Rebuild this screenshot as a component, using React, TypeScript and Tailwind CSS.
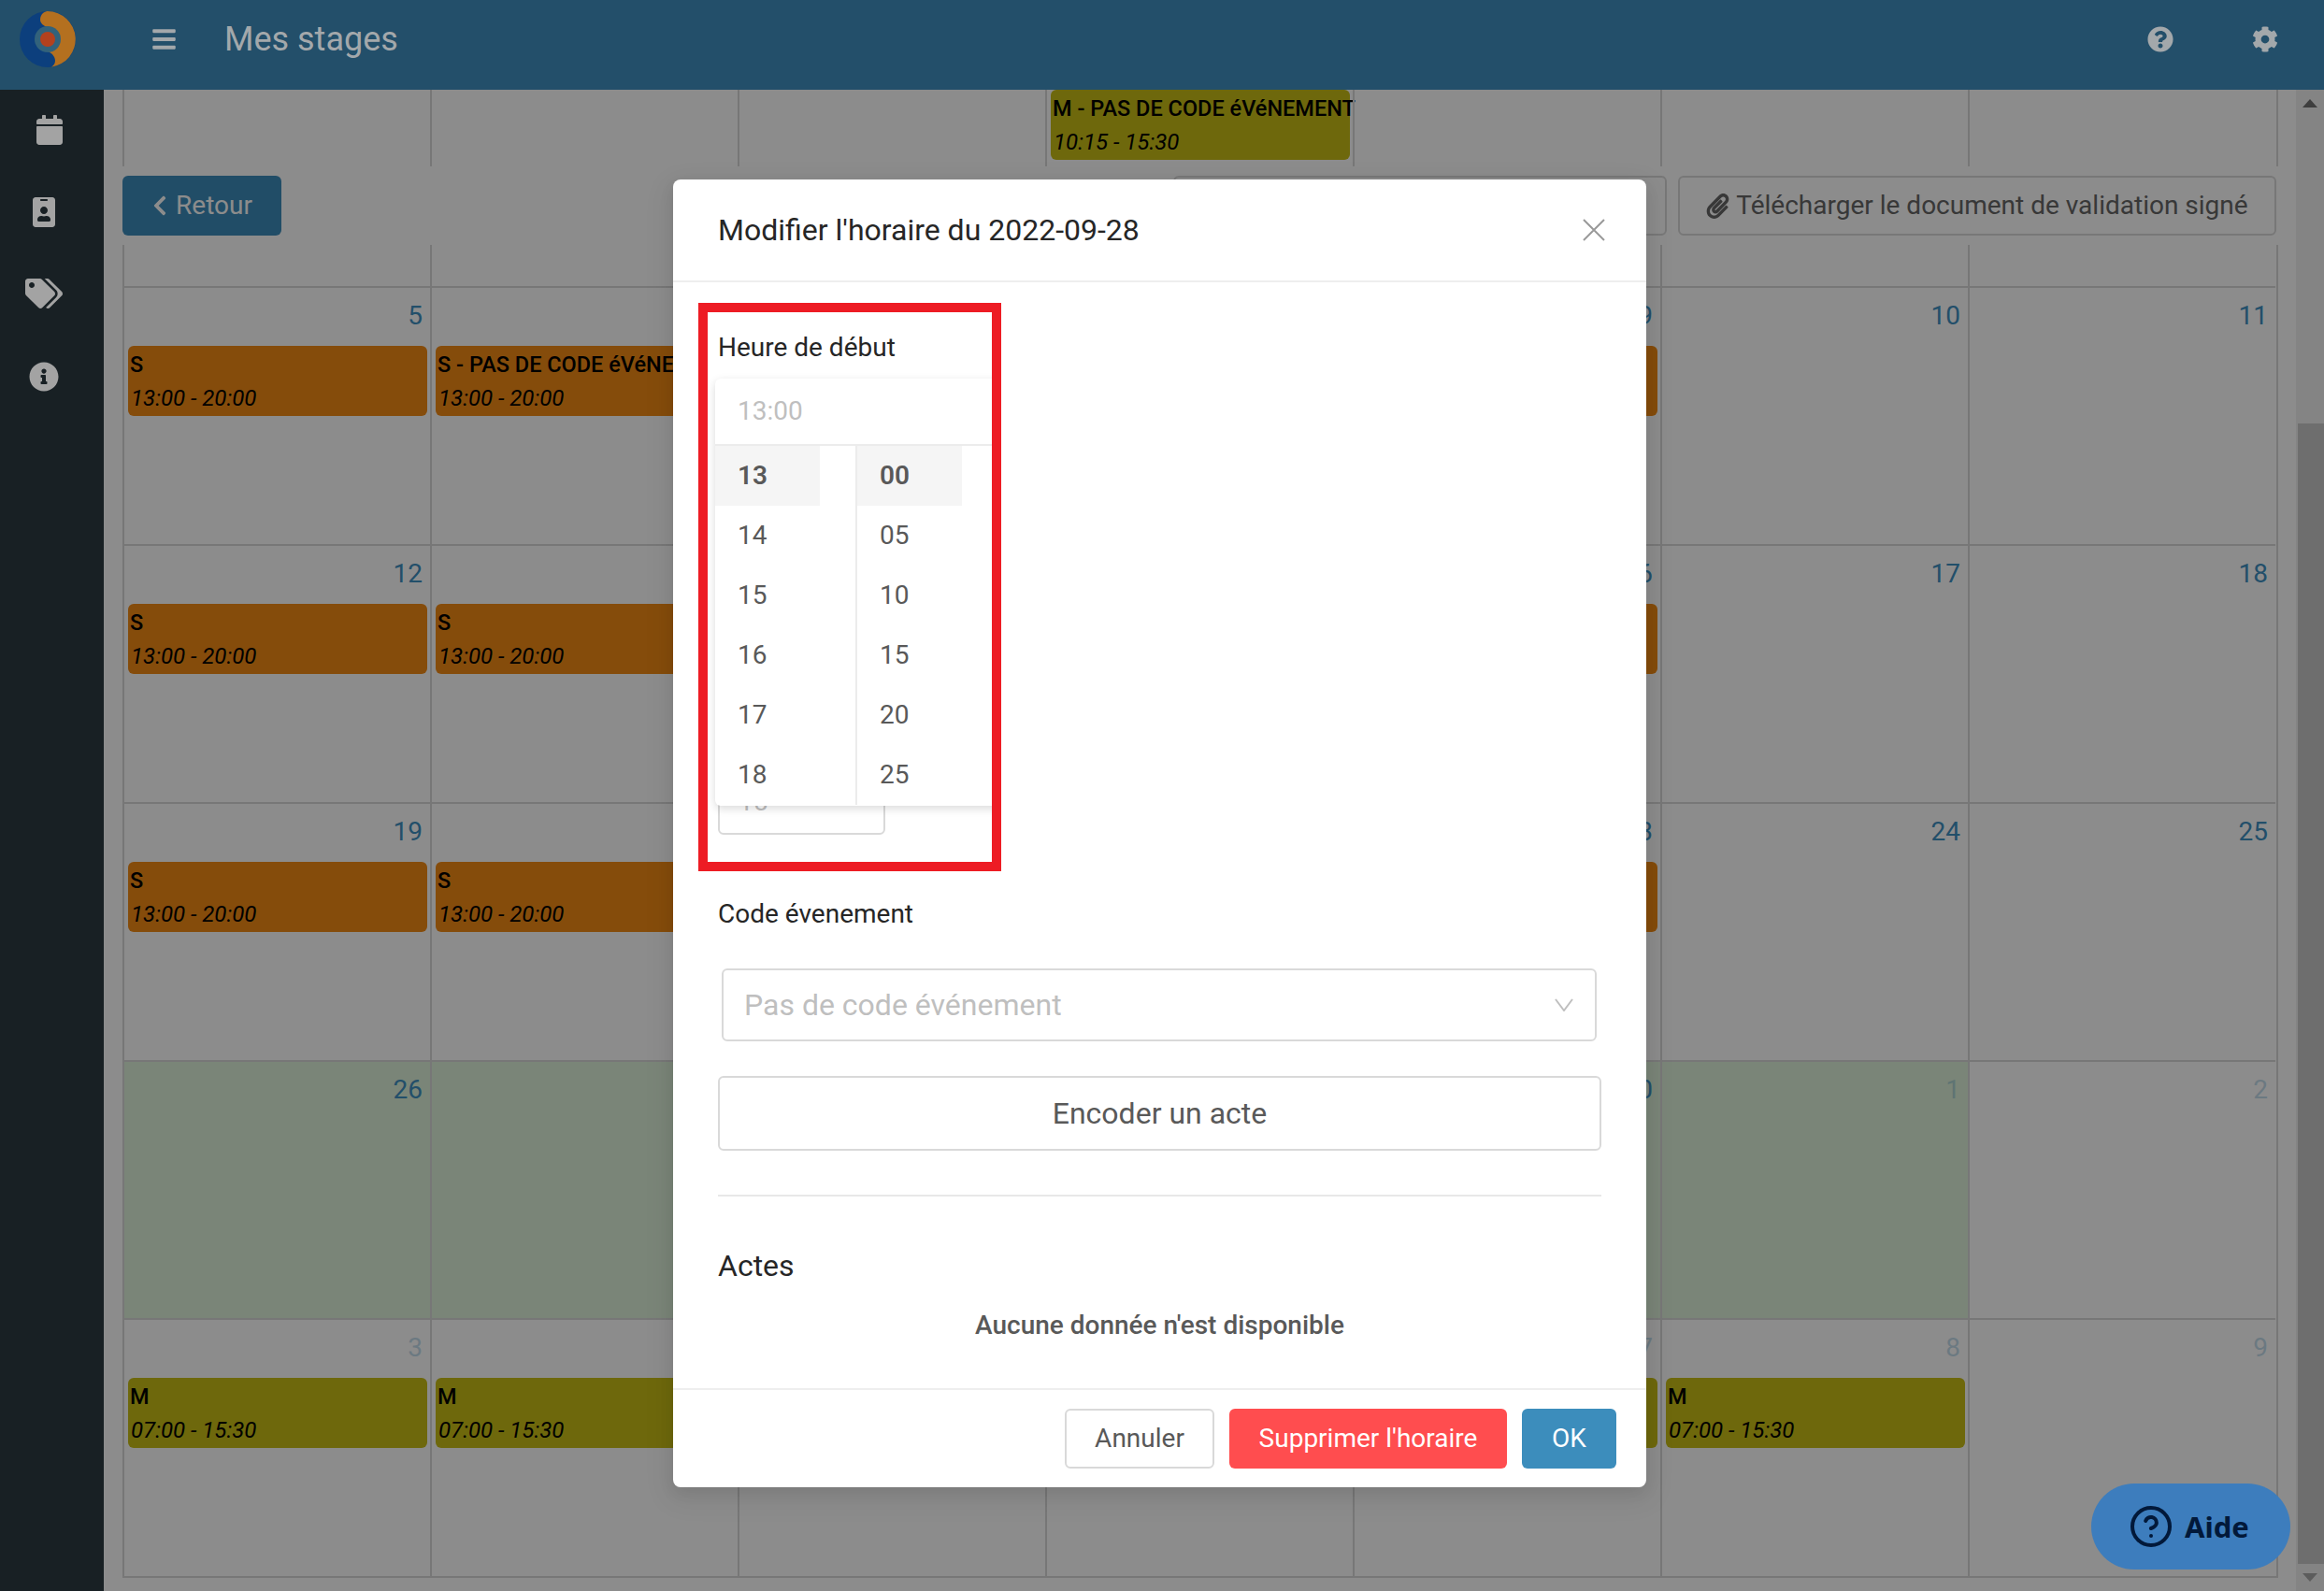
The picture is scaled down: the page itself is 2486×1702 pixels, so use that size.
import React from "react";
import { CircleHelp } from "lucide-react";
import {
  FaBars,
  FaCalendar,
  FaChevronLeft,
  FaCog,
  FaIdBadge,
  FaInfoCircle,
  FaPaperclip,
  FaQuestionCircle,
  FaTags,
} from "react-icons/fa";

type Ev = { title: string; time: string; kind: "orange" | "olive" };
type Cell = { n?: number; faded?: boolean; green?: boolean; ev?: Ev };

const S: Ev = { title: "S", time: "13:00 - 20:00", kind: "orange" };
const SP: Ev = { title: "S - PAS DE CODE éVéNEMENT", time: "13:00 - 20:00", kind: "orange" };
const M: Ev = { title: "M", time: "07:00 - 15:30", kind: "olive" };
const MP: Ev = { title: "M - PAS DE CODE éVéNEMENT", time: "10:15 - 15:30", kind: "olive" };

const rows: Cell[][] = [
  [{}, {}, {}, { ev: MP }, {}, {}, {}],
  [{ n: 5, ev: S }, { n: 6, ev: SP }, {}, {}, { n: 9, ev: S }, { n: 10 }, { n: 11 }],
  [{ n: 12, ev: S }, { n: 13, ev: S }, {}, {}, { n: 16, ev: S }, { n: 17 }, { n: 18 }],
  [{ n: 19, ev: S }, { n: 20, ev: S }, {}, {}, { n: 23, ev: S }, { n: 24 }, { n: 25 }],
  [
    { n: 26, green: true },
    { green: true },
    { green: true },
    { green: true },
    { n: 30, green: true },
    { n: 1, green: true, faded: true },
    { n: 2, faded: true },
  ],
  [
    { n: 3, faded: true, ev: M },
    { ev: M },
    {},
    {},
    { n: 7, faded: true, ev: M },
    { n: 8, faded: true, ev: M },
    { n: 9, faded: true },
  ],
];

function Event({ ev }: { ev: Ev }) {
  return (
    <div
      className={`ml-[4px] mr-[3px] h-[75px] rounded-md pt-[2px] leading-[36px] whitespace-nowrap text-black ${
        ev.kind === "orange" ? "bg-[#f38a14]" : "bg-[#c8bd16]"
      }`}
    >
      <div className="pl-[2px] text-[23.5px] font-medium">{ev.title}</div>
      <div className="pl-[3px] text-[24px] italic">{ev.time}</div>
    </div>
  );
}

function Logo() {
  return (
    <svg width="60" height="60" viewBox="0 0 60 60">
      <circle cx="30" cy="30" r="30" fill="#0c3f7d" />
      <path
        d="M25 2 C27 0.5 29 0 30 0 A30 30 0 0 1 34 59.7 C38 57 39 53 37 49 C35 45 32 44 30 43 L30 17 C26 16 22 13 22 9 C22 6 23 4 25 2 Z"
        fill="#b4701f"
      />
      <circle cx="30" cy="30" r="14" fill="#32627b" />
      <circle cx="30" cy="30" r="8" fill="#b3411e" />
    </svg>
  );
}

function Hours({ items, bordered }: { items: string[]; bordered?: boolean }) {
  return (
    <div className={`w-[152px] ${bordered ? "border-r-2 border-[#ececec]" : ""}`}>
      {items.map((t, i) => (
        <div
          key={t}
          className={`flex h-[64px] w-[112px] items-center pl-[24px] text-[28px] text-[#595959] ${
            i === 0 ? "bg-[#f5f5f5] font-semibold" : ""
          }`}
        >
          {t}
        </div>
      ))}
    </div>
  );
}

export default function App() {
  return (
    <div className="relative flex h-[1702px] w-[2486px] flex-col overflow-hidden bg-white [font-family:Roboto,sans-serif]">
      <header className="flex h-[96px] shrink-0 items-center bg-[#234f6a] pb-[12px] text-[#a3a8ab]">
        <div className="flex w-[111px] items-center justify-center pr-[9px]">
          <Logo />
        </div>
        <FaBars className="ml-[52px] h-[28px] w-[25px]" />
        <div className="ml-[52px] text-[36px] leading-[48px]">Mes stages</div>
        <FaQuestionCircle className="ml-auto h-[28px] w-[28px]" />
        <FaCog className="ml-[84px] mr-[49px] h-[28px] w-[28px]" />
      </header>

      <div className="flex min-h-0 flex-1">
        <aside className="flex w-[111px] shrink-0 flex-col items-center bg-[#182024] pr-[17px] pt-[27px] text-[#a3a3a3]">
          <FaCalendar className="ml-[12px] h-[32px] w-[28px]" />
          <FaIdBadge className="mt-[56px] h-[32px] w-[24px]" />
          <FaTags className="mt-[55px] h-[32px] w-[40px]" />
          <FaInfoCircle className="mt-[57px] h-[32px] w-[32px]" />
        </aside>

        <main className="relative flex min-w-0 flex-1 overflow-hidden">
          <div className="relative min-w-0 flex-1 pl-[20px]">
            <div className="grid w-[2306px] grid-cols-[repeat(7,329px)] grid-rows-[210px_repeat(5,276px)] border-r-2 border-b-2 border-[#d9d9d9]">
              {rows.map((row, r) =>
                row.map((c, i) => (
                  <div
                    key={`${r}-${i}`}
                    className={`border-l-2 border-[#d9d9d9] ${r > 0 ? "border-t-2" : ""} ${c.green ? "bg-[#def3da]" : ""} ${
                      c.n === undefined && r > 0 ? "pt-[62px]" : ""
                    }`}
                  >
                    {c.n !== undefined && (
                      <div
                        className={`mb-[12px] mt-[10px] pr-[8px] text-right text-[28px] leading-[40px] text-[#3f90c2] ${
                          c.faded ? "opacity-30" : ""
                        }`}
                      >
                        {c.n}
                      </div>
                    )}
                    {c.ev && <Event ev={c.ev} />}
                  </div>
                )),
              )}
            </div>

            <div className="absolute left-0 right-0 top-[82px] flex h-[84px] items-center bg-white pl-[20px] pr-[21px] text-[28px]">
              <button className="flex h-[64px] w-[170px] items-center justify-center gap-[8px] rounded-md bg-[#3c8dbc] text-white">
                <FaChevronLeft className="h-[24px] w-[18px]" />
                Retour
              </button>
              <div className="ml-auto flex gap-[12px]">
                <button className="h-[64px] w-[528px] rounded-md border-2 border-[#d9d9d9]" />
                <button className="flex h-[64px] w-[640px] items-center justify-center gap-[7px] rounded-md border-2 border-[#d9d9d9] text-[#666666]">
                  <FaPaperclip className="h-[27px] w-[25px]" />
                  Télécharger le document de validation signé
                </button>
              </div>
            </div>
          </div>

          <div className="flex w-[30px] shrink-0 flex-col bg-[#f1f1f1]">
            <div className="flex h-[29px] items-center justify-center">
              <svg width="16" height="9" viewBox="0 0 16 9">
                <path d="M8 0 L16 9 L0 9 Z" fill="#727272" />
              </svg>
            </div>
            <div className="h-[328px]" />
            <div className="ml-[2px] flex-1 bg-[#c8c8c8]" />
            <div className="flex h-[29px] items-center justify-center">
              <svg width="16" height="9" viewBox="0 0 16 9">
                <path d="M0 0 L16 0 L8 9 Z" fill="#a8a8a8" />
              </svg>
            </div>
          </div>

          <div className="absolute inset-0 bg-black/45" />
        </main>
      </div>

      <div className="absolute left-[720px] top-[192px] flex h-[1399px] w-[1041px] flex-col rounded-lg bg-white shadow-[0_6px_16px_rgba(0,0,0,0.08),0_9px_28px_8px_rgba(0,0,0,0.05)]">
        <div className="flex h-[110px] shrink-0 items-center justify-between border-b-2 border-[#eeeeee] pl-[48px] pr-[44px]">
          <div className="text-[32px] leading-[44px] text-[#262626]">Modifier l'horaire du 2022-09-28</div>
          <svg width="24" height="24" viewBox="0 0 24 24" stroke="#999999" strokeWidth="2" fill="none">
            <path d="M1 1 L23 23 M23 1 L1 23" />
          </svg>
        </div>

        <div className="flex-1 px-[48px] pt-[48px]">
          <div className="relative flex h-[543px] flex-col">
            <div className="text-[28px] leading-[44px] text-[#262626]">Heure de début</div>
            <div className="mt-auto flex h-[70px] w-[179px] items-center rounded-md border-2 border-[#d9d9d9] pl-[20px] text-[28px] text-[#bfbfbf]">
              15
            </div>
            <div className="absolute left-[-21px] top-[-26px] h-[608px] w-[324px] overflow-hidden border-[10px] border-[#ed1c24]">
              <div className="absolute left-[8px] top-[71px] h-[457px] w-[320px] rounded-md bg-white shadow-[0_3px_10px_rgba(0,0,0,0.15)]">
                <div className="flex h-[72px] items-center border-b-2 border-[#ececec] pl-[24px] text-[28px] text-[#bfbfbf]">
                  13:00
                </div>
                <div className="flex">
                  <Hours items={["13", "14", "15", "16", "17", "18"]} bordered />
                  <Hours items={["00", "05", "10", "15", "20", "25"]} />
                </div>
              </div>
            </div>
          </div>

          <div className="mt-[63px] text-[28px] leading-[44px] text-[#262626]">Code évenement</div>
          <div className="ml-[4px] mr-[5px] mt-[36px] flex h-[78px] items-center justify-between rounded-md border-2 border-[#d9d9d9] pl-[22px] pr-[23px] text-[32px] text-[#bfbfbf]">
            Pas de code événement
            <svg width="20" height="14" viewBox="0 0 20 14" fill="none" stroke="#bfbfbf" strokeWidth="2">
              <path d="M1 1 L10 13 L19 1" />
            </svg>
          </div>
          <button className="mt-[37px] h-[80px] w-full rounded-md border-2 border-[#d9d9d9] text-[32px] text-[#595959]">
            Encoder un acte
          </button>
          <div className="mt-[47px] border-t-2 border-[#e8e8e8]" />
          <div className="mt-[50px] text-[32px] leading-[48px] text-[#262626]">Actes</div>
          <div className="mt-[18px] text-center text-[28px] font-medium leading-[44px] text-[#595959]">
            Aucune donnée n'est disponible
          </div>
        </div>

        <div className="flex h-[106px] shrink-0 justify-end gap-[16px] border-t-2 border-[#eeeeee] pr-[32px] pt-[20px] text-[28px]">
          <button className="h-[64px] w-[160px] rounded-md border-2 border-[#d9d9d9] text-[#595959]">Annuler</button>
          <button className="h-[64px] w-[297px] rounded-md bg-[#ff4d4f] text-white">Supprimer l'horaire</button>
          <button className="h-[64px] w-[101px] rounded-md bg-[#3c8dbc] text-white">OK</button>
        </div>
      </div>

      <div className="absolute left-[2237px] top-[1587px] flex h-[92px] w-[213px] items-center gap-[12px] rounded-full bg-[#3d7dbd] pl-[40px] text-[#02193a]">
        <CircleHelp size={48} strokeWidth={2} />
        <span className="text-[31px] font-bold [font-family:'Noto_Sans',sans-serif]">Aide</span>
      </div>
    </div>
  );
}
